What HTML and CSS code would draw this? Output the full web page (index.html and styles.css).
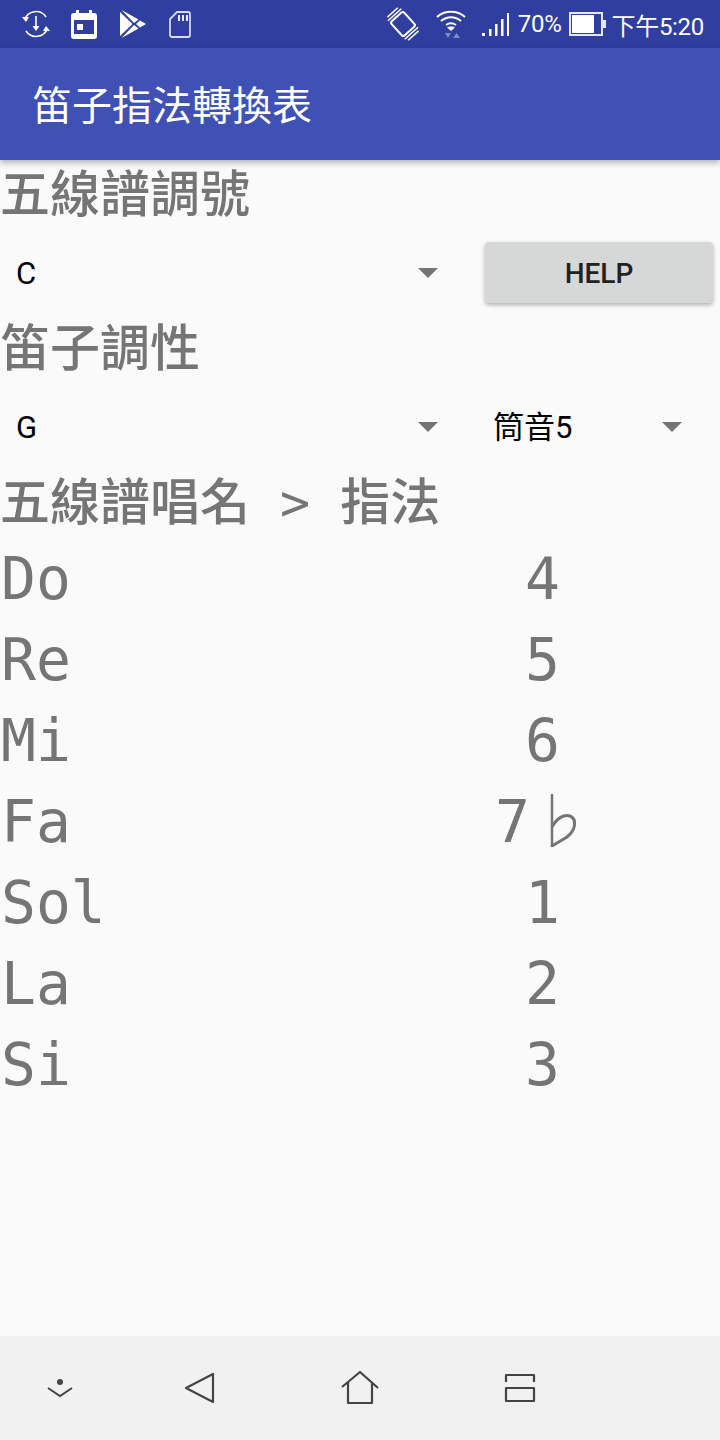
FILE: index.html
```html
<!DOCTYPE html>
<html lang="zh-Hant">
<head>
    <meta charset="UTF-8">
    <meta name="viewport" content="width=device-width, initial-scale=1.0">
    <title>笛子指法轉換表</title>
    <link rel="stylesheet" href="styles.css">
</head>
<body>
    <div class="phone">
        <div class="statusbar">
            <div class="status-left">
                <svg width="28" height="28" viewBox="0 0 28 28" fill="none" stroke="#fff" stroke-width="1.600">
                    <path d="M2.500 10A12 12 0 0 1 24 7"/>
                    <path d="M25.500 18A12 12 0 0 1 4 21"/>
                    <path d="M0 7l4 5 3-5z" fill="#fff" stroke="none"/>
                    <path d="M28 21l-4-5-3 5z" fill="#fff" stroke="none"/>
                    <path d="M14 6v14"/>
                    <path d="M10.500 16l3.500 5 3.500-5z" fill="#fff" stroke="none"/>
                </svg>
                <svg class="ic-calendar" width="26" height="29" viewBox="0 0 26 29">
                    <path d="M5 0h3v3h10V0h3v3h2a3 3 0 0 1 3 3v20a3 3 0 0 1-3 3H3a3 3 0 0 1-3-3V6a3 3 0 0 1 3-3h2z" fill="#fff"/>
                    <path d="M3 10h20v14H3z" fill="#303f9f"/>
                    <path d="M6 14h6v6H6z" fill="#fff"/>
                </svg>
                <svg width="26" height="28" viewBox="0 0 26 28" fill="#fff">
                    <path d="M0 2l12.500 12L0 26z"/>
                    <path d="M1.500 0l17 9.500-4.500 3.500z"/>
                    <path d="M1.500 28l17-9.500-4.500-3.500z"/>
                    <path d="M20 10.500l6 3.500-6 3.500-4-3.500z"/>
                </svg>
                <svg width="22" height="27" viewBox="0 0 22 27" fill="none" stroke="#d5daf0" stroke-width="1.800">
                    <path d="M8 1h11a2 2 0 0 1 2 2v21a2 2 0 0 1-2 2H3a2 2 0 0 1-2-2V8z"/>
                    <path d="M10 4v6M14 4v6M18 4v6" stroke="#fff"/>
                </svg>
            </div>
            <div class="status-right">
                <svg class="ic-rotate" width="34" height="34" viewBox="0 0 34 34" fill="none" stroke="#fff" stroke-width="2">
                    <g transform="rotate(-42 17 17)">
                        <rect x="8.500" y="7.500" width="17" height="19" rx="2"/>
                        <path d="M8 4.500h18M10 1.500h14M8 29.500h18M10 32.500h14" stroke-width="1.500"/>
                    </g>
                </svg>
                <svg class="ic-wifi" width="30" height="30" viewBox="0 0 30 30" fill="none" stroke="#fff" stroke-width="2">
                    <path d="M1 8c8-7 20-7 28 0"/>
                    <path d="M5 12c6-5 14-5 20 0"/>
                    <path d="M10 16c3-2 7-2 10 0"/>
                    <path d="M11 18.500c2-1.500 6-1.500 8 0l-4 3.500z" fill="#fff" stroke="none"/>
                    <path d="M9 24h6l-3 5zM17 29h7l-3.500-5z" fill="#7d8acb" stroke="none"/>
                </svg>
                <svg class="ic-signal" width="28" height="23" viewBox="0 0 28 23" fill="#fff">
                    <rect x="0" y="20" width="3" height="3"/>
                    <rect x="7" y="16" width="2.500" height="7"/>
                    <rect x="13" y="11" width="2.500" height="12"/>
                    <rect x="19" y="6" width="2.500" height="17"/>
                    <rect x="25" y="0" width="2" height="23"/>
                </svg>
                <span class="status-text pct">70%</span>
                <svg class="ic-battery" width="37" height="24" viewBox="0 0 37 24">
                    <rect x="1" y="1" width="32" height="22" fill="none" stroke="#e4e7f5" stroke-width="2"/>
                    <rect x="3" y="3" width="22" height="18" fill="#fff"/>
                    <rect x="34" y="8" width="3" height="8" fill="#e4e7f5"/>
                </svg>
                <span class="status-text clock">下午5:20</span>
            </div>
        </div>

        <div class="appbar">笛子指法轉換表</div>

        <main class="content">
            <div class="label">五線譜調號</div>
            <div class="control-row">
                <div class="spinner spinner-wide"><span class="spinner-value">C</span><i class="arrow"></i></div>
                <button class="help-btn">HELP</button>
            </div>
            <div class="label">笛子調性</div>
            <div class="control-row">
                <div class="spinner spinner-wide"><span class="spinner-value">G</span><i class="arrow"></i></div>
                <div class="spinner spinner-small"><span class="spinner-value">筒音5</span><i class="arrow"></i></div>
            </div>
            <div class="label label-mono">五線譜唱名 &gt; 指法</div>
            <div class="note-row"><span class="note">Do</span><span class="finger">4</span></div>
            <div class="note-row"><span class="note">Re</span><span class="finger">5</span></div>
            <div class="note-row"><span class="note">Mi</span><span class="finger">6</span></div>
            <div class="note-row"><span class="note">Fa</span><span class="finger">7
                <svg class="flat" width="28" height="54" viewBox="0 0 28 54" fill="none" stroke="#757575" stroke-width="2.500">
                    <path d="M2 0v53"/>
                    <path d="M2 33c5-9 12-13 18-11 7 3 6 14-3 21L2 52" stroke-width="3"/>
                </svg>
            </span></div>
            <div class="note-row"><span class="note">Sol</span><span class="finger">1</span></div>
            <div class="note-row"><span class="note">La</span><span class="finger">2</span></div>
            <div class="note-row"><span class="note">Si</span><span class="finger">3</span></div>
        </main>

        <div class="navbar">
            <svg class="ic-down" width="30" height="22" viewBox="0 0 30 22" fill="none" stroke="#444" stroke-width="2">
                <circle cx="15" cy="5" r="3" fill="#444" stroke="none"/>
                <path d="M3 11l12 8 12-8"/>
            </svg>
            <svg width="32" height="32" viewBox="0 0 32 32" fill="none" stroke="#444" stroke-width="2.200" stroke-linejoin="round">
                <path d="M29 2v28L2 16z"/>
            </svg>
            <svg width="38" height="34" viewBox="0 0 38 34" fill="none" stroke="#444" stroke-width="2.200" stroke-linejoin="round">
                <path d="M1 16L19 1l18 16"/>
                <path d="M7 11v21h24V11"/>
            </svg>
            <svg width="32" height="30" viewBox="0 0 32 30" fill="none" stroke="#444" stroke-width="2.200" stroke-linejoin="round">
                <path d="M2 9V2h28v7"/>
                <path d="M2 15h28v13H2z"/>
            </svg>
        </div>
    </div>
</body>
</html>
```

FILE: styles.css
```css
* {
  box-sizing: border-box;
}

body {
  margin: 0;
  background-color: #fafafa;
  font-family: "Roboto", "Noto Sans CJK TC", sans-serif;
}

.phone {
  width: 720px;
  height: 1440px;
  display: flex;
  flex-direction: column;
  overflow: hidden;
}

.statusbar {
  height: 48px;
  flex: none;
  background-color: #303f9f;
  display: flex;
  justify-content: space-between;
  align-items: center;
  padding: 0 16px 0 22px;
  color: #fff;
}

.status-left {
  display: flex;
  align-items: center;
  gap: 23px;
}

.ic-calendar {
  margin-left: -2px;
}

.status-right {
  display: flex;
  align-items: center;
}

.ic-rotate {
  margin-right: 16px;
}

.ic-wifi {
  margin-right: 16px;
}

.ic-signal {
  margin-right: 8px;
}

.status-text {
  font-size: 24px;
  letter-spacing: -0.3px;
}

.ic-battery {
  margin: 0 6px 0 7px;
}

.appbar {
  height: 112px;
  flex: none;
  background-color: #3f51b5;
  color: #fff;
  font-size: 40px;
  line-height: 118px;
  padding-left: 32px;
  box-shadow: 0 3px 6px rgba(0, 0, 0, 0.28);
  position: relative;
}

.content {
  flex: 1;
  background-color: #fafafa;
}

.label {
  height: 70px;
  font-size: 50px;
  font-weight: 500;
  line-height: 70px;
  color: #757575;
  white-space: pre;
}

.label-mono {
  font-family: "DejaVu Sans Mono", "Noto Sans CJK TC", monospace;
}

.control-row {
  height: 84px;
  display: flex;
  align-items: center;
}

.spinner {
  display: flex;
  align-items: center;
  justify-content: space-between;
  color: #000;
  font-size: 31px;
  padding-top: 2px;
}

.spinner-wide {
  width: 480px;
  padding-left: 16px;
  padding-right: 42px;
}

.spinner-small {
  width: 240px;
  padding-left: 13px;
  padding-right: 38px;
}

.spinner-small .spinner-value {
  margin-top: -5px;
}

.arrow {
  width: 0;
  height: 0;
  border-left: 10px solid transparent;
  border-right: 10px solid transparent;
  border-top: 10px solid #757575;
}

.help-btn {
  width: 228px;
  height: 61px;
  margin-left: 5px;
  padding-top: 3px;
  border: none;
  border-radius: 4px;
  background-color: #d6d7d7;
  box-shadow: 0 2px 4px rgba(0, 0, 0, 0.3);
  color: #212121;
  font-family: "Roboto", sans-serif;
  font-weight: 500;
  font-size: 28px;
}

.note-row {
  height: 81px;
  display: flex;
  align-items: center;
  padding-left: 1px;
  color: #757575;
  font-family: "DejaVu Sans Mono", monospace;
  font-size: 58px;
}

.note {
  width: 364px;
}

.finger {
  width: 355px;
  display: flex;
  justify-content: center;
  align-items: center;
  gap: 20px;
}

.flat {
  margin-top: -2px;
  margin-right: 12px;
}

.navbar {
  height: 104px;
  flex: none;
  background-color: #f1f1f1;
  display: flex;
  align-items: center;
  padding-left: 45px;
  gap: 125px;
}

.ic-down {
  margin-right: -16px;
}
```
